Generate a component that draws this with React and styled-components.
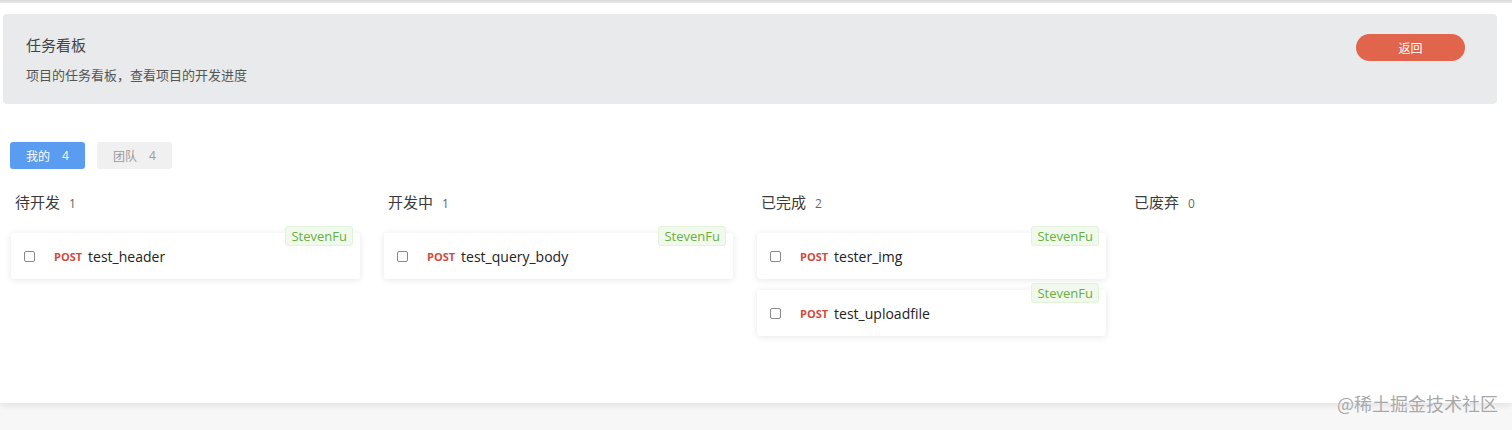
import React, { useState } from "react";
import styled, { createGlobalStyle } from "styled-components";

const Global = createGlobalStyle`
  html, body { margin: 0; padding: 0; }
  body {
    background: #f7f7f7;
    font-family: "Open Sans", "Noto Sans CJK SC", sans-serif;
    color: #333;
    overflow: hidden;
  }
`;

const Page = styled.div`
  position: relative;
  height: 430px;
  overflow: hidden;
`;

const TopShade = styled.div`
  height: 3px;
  background: linear-gradient(#d8d8d8, #ededed);
`;

const Main = styled.div`
  background: #ffffff;
  height: 400px;
  box-shadow: 0 3px 6px rgba(0, 0, 0, 0.08);
  padding: 11px 15px 0 3px;
  box-sizing: border-box;
`;

const Header = styled.div`
  background: #e8eaeb;
  border-radius: 4px;
  height: 90px;
  display: flex;
  justify-content: space-between;
  align-items: flex-start;
  padding: 0 32px 0 23px;
  box-sizing: border-box;
`;

const HeaderText = styled.div`
  display: flex;
  flex-direction: column;
  padding-top: 21px;
`;

const Title = styled.div`
  font-size: 15px;
  line-height: 20px;
  color: #444;
`;

const Subtitle = styled.div`
  font-size: 13px;
  line-height: 17px;
  color: #555;
  margin-top: 12px;
`;

const BackButton = styled.button`
  margin-top: 20px;
  width: 109px;
  height: 27px;
  border: none;
  border-radius: 14px;
  background: #e1644d;
  color: #fff;
  font-family: inherit;
  font-size: 12px;
  cursor: pointer;
`;

const Tabs = styled.div`
  display: flex;
  gap: 12px;
  margin: 38px 0 0 7px;
`;

const Tab = styled.div`
  width: 75px;
  height: 27px;
  border-radius: 3px;
  display: flex;
  align-items: center;
  justify-content: center;
  gap: 12px;
  font-size: 12px;
  background: ${(p) => (p.$active ? "#5a9df0" : "#f0f0f0")};
  color: ${(p) => (p.$active ? "#ffffff" : "#999")};
  cursor: pointer;
`;

const Board = styled.div`
  display: grid;
  grid-template-columns: repeat(4, 350px);
  column-gap: 23px;
  margin: 0 0 0 7px;
`;

const Column = styled.div`
  display: flex;
  flex-direction: column;
`;

const ColumnHead = styled.div`
  display: flex;
  align-items: baseline;
  gap: 9px;
  padding: 22px 0 0 5px;
  height: 43px;
  box-sizing: border-box;
`;

const ColName = styled.span`
  font-size: 15px;
  color: #3a3a3a;
`;

const ColCount = styled.span`
  font-size: 12px;
  color: #666;
`;

const Cards = styled.div`
  display: flex;
  flex-direction: column;
  gap: 11px;
  margin-top: 21px;
`;

const Card = styled.div`
  position: relative;
  height: 46px;
  background: #fff;
  border-radius: 3px;
  box-shadow: 0 1px 7px rgba(0, 0, 0, 0.1);
  display: flex;
  align-items: center;
  padding-left: 13px;
  margin-left: 1px;
`;

const Check = styled.span`
  width: 9px;
  height: 9px;
  border: 1px solid #888;
  border-radius: 2px;
  margin-right: 19px;
  flex-shrink: 0;
`;

const Method = styled.span`
  font-size: 11px;
  font-weight: 700;
  color: #d2493e;
  margin-right: 6px;
`;

const Name = styled.span`
  font-size: 14px;
  color: #222;
`;

const Tag = styled.span`
  position: absolute;
  top: -7px;
  right: 7px;
  height: 20px;
  padding: 0 5px;
  display: flex;
  align-items: center;
  font-size: 13px;
  color: #67b03f;
  background: #f1f9ec;
  border: 1px solid #e3f2da;
  border-radius: 3px;
  box-sizing: border-box;
`;

const Watermark = styled.div`
  position: absolute;
  right: 14px;
  bottom: 14px;
  font-size: 18px;
  color: #a8a8a8;
  font-family: "Noto Sans CJK SC", sans-serif;
  text-shadow: 0 0 1px #fff;
`;

const columns = [
  { name: "待开发", items: ["test_header"] },
  { name: "开发中", items: ["test_query_body"] },
  { name: "已完成", items: ["tester_img", "test_uploadfile"] },
  { name: "已废弃", items: [] },
];

export default function App() {
  const [tab, setTab] = useState("mine");
  return (
    <Page>
      <Global />
      <TopShade />
      <Main>
        <Header>
          <HeaderText>
            <Title>任务看板</Title>
            <Subtitle>项目的任务看板，查看项目的开发进度</Subtitle>
          </HeaderText>
          <BackButton>返回</BackButton>
        </Header>
        <Tabs>
          <Tab $active={tab === "mine"} onClick={() => setTab("mine")}>
            <span>我的</span>
            <span>4</span>
          </Tab>
          <Tab $active={tab === "team"} onClick={() => setTab("team")}>
            <span>团队</span>
            <span>4</span>
          </Tab>
        </Tabs>
        <Board>
          {columns.map((c) => (
            <Column key={c.name}>
              <ColumnHead>
                <ColName>{c.name}</ColName>
                <ColCount>{c.items.length}</ColCount>
              </ColumnHead>
              <Cards>
                {c.items.map((it) => (
                  <Card key={it}>
                    <Check />
                    <Method>POST</Method>
                    <Name>{it}</Name>
                    <Tag>StevenFu</Tag>
                  </Card>
                ))}
              </Cards>
            </Column>
          ))}
        </Board>
      </Main>
      <Watermark>@稀土掘金技术社区</Watermark>
    </Page>
  );
}
